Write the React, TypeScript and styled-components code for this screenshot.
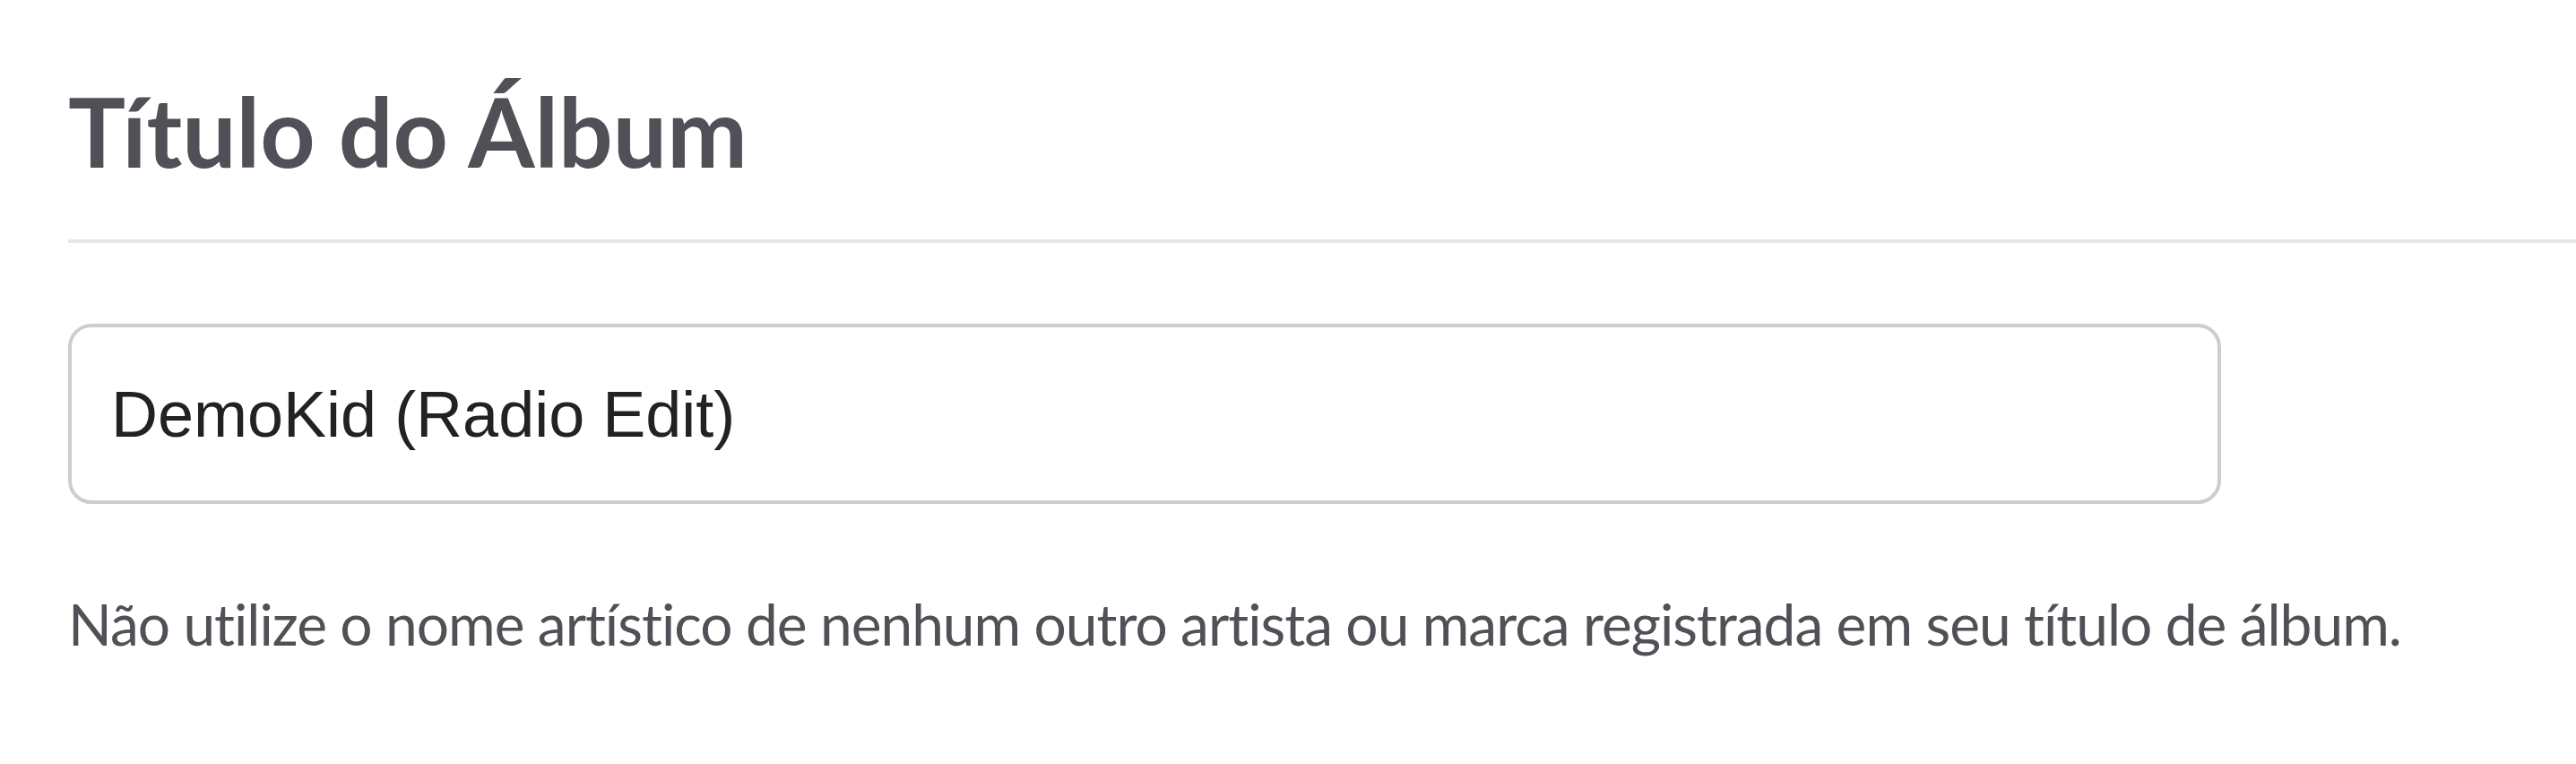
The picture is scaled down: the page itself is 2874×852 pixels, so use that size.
import React from 'react';
import styled, { createGlobalStyle } from 'styled-components';

const GlobalStyle = createGlobalStyle`
	html, body {
		margin: 0;
		padding: 0;
		background: #ffffff;
	}
`;

const App = () => {
	return (
		<>
			<GlobalStyle />
			<Section>
				<Heading>Título do Álbum</Heading>
				<Divider />
				<Field>
					<TextInput type="text" defaultValue="DemoKid (Radio Edit)" />
				</Field>
				<Hint>Não utilize o nome artístico de nenhum outro artista ou marca registrada em seu título de álbum.</Hint>
			</Section>
		</>
	);
}

export default App;

const Section = styled.div`
	width: 100%;
	height: 852px;
	box-sizing: border-box;
	padding: 92px 0 0 76px;
	display: flex;
	flex-direction: column;
	overflow: hidden;
`;

const Heading = styled.h1`
	margin: 0;
	font-family: Lato, "Noto Sans", sans-serif;
	font-weight: 700;
	font-size: 107px;
	line-height: 107px;
	color: #505157;
`;

const Divider = styled.div`
	margin-top: 68px;
	height: 4px;
	background: #e6e6ea;
`;

const Field = styled.div`
	margin-top: 90px;
	width: 2402px;
`;

const TextInput = styled.input`
	width: 100%;
	height: 201px;
	box-sizing: border-box;
	border: 4px solid #cdcdcd;
	border-radius: 26px;
	padding: 0 44px;
	font-family: "Liberation Sans", Arial, sans-serif;
	font-size: 72px;
	color: #222222;
	background: #ffffff;
	outline: none;
`;

const Hint = styled.p`
	margin: 102px 0 0;
	font-family: Lato, "Noto Sans", sans-serif;
	font-size: 64px;
	line-height: 64px;
	letter-spacing: -1px;
	color: #505157;
	white-space: nowrap;
`;
